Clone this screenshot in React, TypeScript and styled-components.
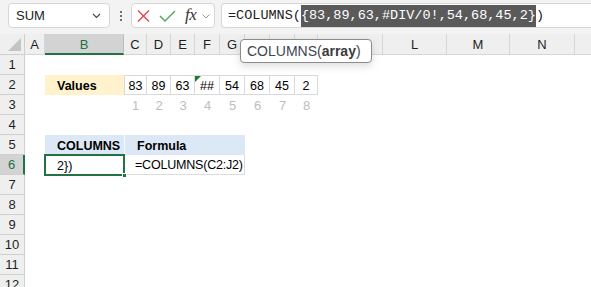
import * as React from 'react';
import styled, { createGlobalStyle } from 'styled-components';

const GlobalStyle = createGlobalStyle`
	html, body {
		margin: 0;
		padding: 0;
		background: #ffffff;
		overflow: hidden;
	}
	body {
		font-family: "Liberation Sans", Arial, sans-serif;
		color: #1f1f1f;
	}
`;

const GREEN = '#217346';
const COL_WIDTHS = [25, 20, 79, 23, 24, 24, 25, 25, 25, 25, 23, 65, 64, 63, 65, 64];
const COL_NAMES = ['A', 'B', 'C', 'D', 'E', 'F', 'G', 'H', 'I', 'J', 'K', 'L', 'M', 'N', 'O'];
const ROW_COUNT = 12;
const VALUES = ['83', '89', '63', '##', '54', '68', '45', '2'];

export default function App() {
	return (
		<Page>
			<GlobalStyle />
			<FormulaBar>
				<NameBox>
					<span>SUM</span>
					<Chevron width={9} height={6} viewBox="0 0 9 6">
						<path d="M1 1 L4.5 4.5 L8 1" fill="none" stroke="#444" strokeWidth={1.1} />
					</Chevron>
				</NameBox>
				<Dots>
					<Dot />
					<Dot />
					<Dot />
				</Dots>
				<FxBox>
					<svg width={13} height={12} viewBox="0 0 13 12">
						<path d="M1 0.5 L12 11.5 M12 0.5 L1 11.5" stroke="#e0474c" strokeWidth={1.4} fill="none" />
					</svg>
					<svg width={17} height={12} viewBox="0 0 17 12">
						<path d="M1 6 L6 11 L16 1" stroke="#4ea54f" strokeWidth={1.4} fill="none" />
					</svg>
					<FxLabel>fx</FxLabel>
					<svg width={8} height={5} viewBox="0 0 8 5">
						<path d="M0.5 0.5 L4 4 L7.5 0.5" fill="none" stroke="#9a9a9a" strokeWidth={1} />
					</svg>
				</FxBox>
				<FormulaInput>
					<span>=COLUMNS(</span>
					<Highlight>{'{83,89,63,#DIV/0!,54,68,45,2}'}</Highlight>
					<span>)</span>
				</FormulaInput>
			</FormulaBar>

			<Sheet>
				<Corner />
				{COL_NAMES.map((name) => (
					<ColHeader key={name} $selected={name === 'B'}>
						{name}
					</ColHeader>
				))}
				{Array.from({ length: ROW_COUNT }, (_, i) => (
					<RowHeader key={i} $row={i + 2} $selected={i + 1 === 6}>
						{i + 1}
					</RowHeader>
				))}

				<Cell $row={3} $col={3} $bold $bg="#fff2cc">
					Values
				</Cell>
				{VALUES.map((v, i) => (
					<ValueCell key={v + i} $col={4 + i} $first={i === 0} $error={v === '##'}>
						{v}
					</ValueCell>
				))}
				{VALUES.map((_, i) => (
					<IndexCell key={i} $col={4 + i}>
						{i + 1}
					</IndexCell>
				))}

				<Cell $row={6} $col={3} $bold $bg="#dde8f6">
					COLUMNS
				</Cell>
				<Cell $row={6} $col={4} $span={5} $bold $bg="#dde8f6" $divider>
					Formula
				</Cell>
				<ActiveCell>{'2})'}</ActiveCell>
				<Cell $row={7} $col={4} $span={5} $boxed>
					=COLUMNS(C2:J2)
				</Cell>
			</Sheet>

			<Tooltip>
				COLUMNS(<b>array</b>)
			</Tooltip>
		</Page>
	);
}

const Page = styled.div`
	position: relative;
	width: 591px;
	height: 287px;
	overflow: hidden;
	background: #ffffff;
`;

const FormulaBar = styled.div`
	display: flex;
	align-items: flex-start;
	height: 34px;
	padding: 3px 0 0 8px;
	box-sizing: border-box;
	background: #f3f3f3;
`;

const Box = styled.div`
	display: flex;
	align-items: center;
	height: 25px;
	box-sizing: border-box;
	background: #ffffff;
	border: 1px solid #d6d6d6;
	border-radius: 4px;
`;

const NameBox = styled(Box)`
	width: 102px;
	padding: 0 8px 0 7px;
	justify-content: space-between;
	font-size: 13px;
	color: #1b1b1b;
`;

const Chevron = styled.svg`
	margin-top: 1px;
`;

const Dots = styled.div`
	display: flex;
	flex-direction: column;
	align-items: center;
	gap: 2px;
	width: 21px;
	padding-top: 8px;
`;

const Dot = styled.span`
	width: 2px;
	height: 2px;
	background: #444;
	border-radius: 1px;
`;

const FxBox = styled(Box)`
	width: 84px;
	padding: 0 0 0 5px;
	gap: 9px;
	svg:last-child {
		margin-left: -3px;
		margin-top: 1px;
	}
`;

const FxLabel = styled.span`
	font-family: "Liberation Serif", "Times New Roman", serif;
	font-style: italic;
	font-size: 17px;
	color: #333;
	letter-spacing: -0.5px;
	margin-top: -2px;
`;

const FormulaInput = styled(Box)`
	flex: 1;
	margin-left: 6px;
	padding-left: 6px;
	border-right: none;
	border-radius: 4px 0 0 4px;
	font-family: "Liberation Mono", "Courier New", monospace;
	font-size: 13.5px;
	color: #1b1b1b;
	white-space: pre;
`;

const Highlight = styled.span`
	display: inline-block;
	line-height: 22px;
	background: #5a5a5a;
	color: #ffffff;
`;

const Sheet = styled.div`
	display: grid;
	grid-template-columns: ${COL_WIDTHS.map((w) => `${w}px`).join(' ')};
	grid-template-rows: 21px repeat(${ROW_COUNT}, 20px);
	font-size: 12.5px;
`;

const Corner = styled.div`
	position: relative;
	background: #efefef;
	border-right: 1px solid #cfcfcf;
	border-bottom: 1px solid #cfcfcf;
	&::after {
		content: '';
		position: absolute;
		right: 3px;
		bottom: 3px;
		border-style: solid;
		border-width: 0 0 13px 13px;
		border-color: transparent transparent #c4c4c4 transparent;
	}
`;

const ColHeader = styled.div<{ $selected?: boolean }>`
	display: flex;
	align-items: center;
	justify-content: center;
	box-sizing: border-box;
	background: ${(p) => (p.$selected ? '#d3d3d3' : '#efefef')};
	color: ${(p) => (p.$selected ? GREEN : '#1f1f1f')};
	border-right: 1px solid ${(p) => (p.$selected ? '#bdbdbd' : '#d6d6d6')};
	border-bottom: ${(p) => (p.$selected ? `2px solid ${GREEN}` : '1px solid #d6d6d6')};
	font-size: 13px;
	padding-top: 1px;
`;

const RowHeader = styled.div<{ $row: number; $selected?: boolean }>`
	grid-column: 1;
	grid-row: ${(p) => p.$row};
	display: flex;
	align-items: center;
	justify-content: center;
	box-sizing: border-box;
	background: ${(p) => (p.$selected ? '#d3d3d3' : '#efefef')};
	color: ${(p) => (p.$selected ? GREEN : '#1f1f1f')};
	border-bottom: 1px solid #cfcfcf;
	border-right: ${(p) => (p.$selected ? `2px solid ${GREEN}` : '1px solid #cfcfcf')};
	font-size: 13px;
`;

const Cell = styled.div<{
	$row: number;
	$col: number;
	$span?: number;
	$bold?: boolean;
	$bg?: string;
	$divider?: boolean;
	$boxed?: boolean;
}>`
	grid-row: ${(p) => p.$row};
	grid-column: ${(p) => p.$col} / span ${(p) => p.$span ?? 1};
	display: flex;
	align-items: center;
	box-sizing: border-box;
	padding: 1px 0 0 ${(p) => (p.$boxed ? 11 : 12)}px;
	white-space: nowrap;
	font-weight: ${(p) => (p.$bold ? 700 : 400)};
	letter-spacing: ${(p) => (p.$boxed ? '-0.2px' : 'normal')};
	background: ${(p) => p.$bg ?? 'transparent'};
	color: #000;
	border-left: ${(p) => (p.$divider ? '1px solid #f4f7fb' : 'none')};
	border-right: ${(p) => (p.$boxed ? '1px solid #dcdcdc' : 'none')};
	border-bottom: ${(p) => (p.$boxed ? '1px solid #dcdcdc' : 'none')};
`;

const ValueCell = styled.div<{ $col: number; $first?: boolean; $error?: boolean }>`
	position: relative;
	grid-row: 3;
	grid-column: ${(p) => p.$col};
	display: flex;
	align-items: center;
	justify-content: center;
	box-sizing: border-box;
	padding-top: 1px;
	color: #000;
	border-top: 1px solid #dadada;
	border-bottom: 1px solid #dadada;
	border-right: 1px solid #dadada;
	border-left: ${(p) => (p.$first ? '1px solid #dadada' : 'none')};
	&::before {
		content: '';
		display: ${(p) => (p.$error ? 'block' : 'none')};
		position: absolute;
		left: 0;
		top: 0;
		border-style: solid;
		border-width: 6px 6px 0 0;
		border-color: #1e7b34 transparent transparent transparent;
	}
`;

const IndexCell = styled.div<{ $col: number }>`
	grid-row: 4;
	grid-column: ${(p) => p.$col};
	display: flex;
	align-items: center;
	justify-content: center;
	color: #bdbdbd;
	font-size: 13px;
`;

const ActiveCell = styled.div`
	position: relative;
	grid-row: 7;
	grid-column: 3;
	display: flex;
	align-items: center;
	box-sizing: border-box;
	padding: 1px 0 0 12px;
	color: #000;
	outline: 2px solid ${GREEN};
	outline-offset: -1px;
	&::after {
		content: '';
		position: absolute;
		right: -3px;
		bottom: -3px;
		width: 5px;
		height: 5px;
		background: ${GREEN};
		border: 1px solid #ffffff;
		box-sizing: border-box;
	}
`;

const Tooltip = styled.div`
	position: absolute;
	left: 240px;
	top: 39px;
	width: 132px;
	height: 24px;
	box-sizing: border-box;
	display: flex;
	align-items: center;
	padding-left: 6px;
	background: #ffffff;
	border: 1px solid #8c8c8c;
	border-radius: 4px;
	box-shadow: 0 3px 8px rgba(0, 0, 0, 0.14);
	font-size: 14px;
	color: #3f4650;
	b {
		font-weight: 700;
		color: #3b3b3b;
	}
`;
